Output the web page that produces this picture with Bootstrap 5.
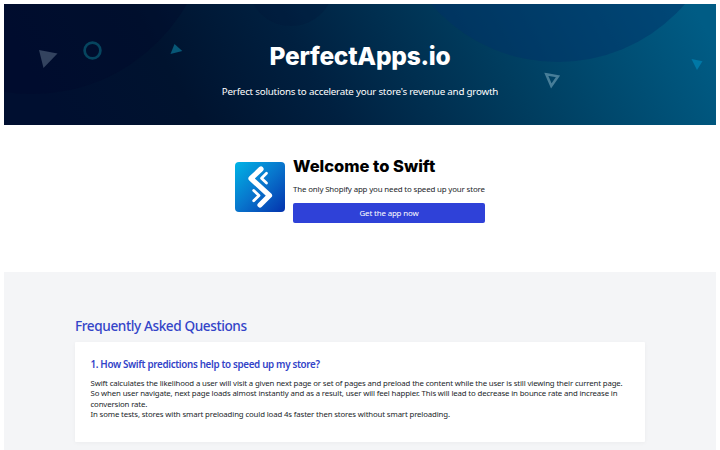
<!DOCTYPE html>
<html lang="en">
<head>
  <meta charset="UTF-8" />
  <title>PerfectApps.io</title>
  <meta name="viewport" content="width=device-width, initial-scale=1" />
  <link href="https://cdn.jsdelivr.net/npm/bootstrap@5.3.3/dist/css/bootstrap.min.css" rel="stylesheet" />
  <style>
    html { overflow:hidden; }
    body { font-family:"Noto Sans", "Open Sans", sans-serif; font-size:8px; color:#212529; background:#fff; padding:4px 4px 0; line-height:10.5px; }
    .hero { height:121px; background:#002345; padding-top:35px; }
    .hero-art { z-index:0; }
    .hero h1, .welcome h2 { font-family:Inter, "Open Sans", sans-serif; font-weight:800; }
    .hero h1 { font-size:24.5px; line-height:34px; letter-spacing:-.25px; }
    .hero p { font-size:9.8px; line-height:14px; margin-top:12px; letter-spacing:-.22px; }
    .welcome { height:147px; padding-top:31px; gap:8px; }
    .welcome h2 { font-size:16.5px; line-height:20px; color:#000; letter-spacing:0; }
    .app-icon { width:50px; height:50px; margin-top:6px; }
    .tagline { margin-top:8px; font-size:7.9px; letter-spacing:-.15px; }
    .btn-get { width:192px; height:20px; margin-top:8px; padding:0; font-size:7.9px; letter-spacing:-.15px; line-height:20px; color:#fff; background:#2f41d8; border:0; border-radius:2px; }
    .btn-get:hover { color:#fff; background:#2635b5; }
    .faq { height:178px; background:#f4f5f7; padding:45px 71px 0; }
    .faq h2 { font-size:13.6px; line-height:18px; font-weight:500; letter-spacing:-.4px; color:#3344c8; }
    .faq-box { height:100px; margin-top:7px; padding:16px 15.5px 0; border-radius:1px; box-shadow:0 1px 4px rgba(0,0,0,.04); }
    .faq-box h3 { font-size:9.8px; line-height:13px; font-weight:600; letter-spacing:-.33px; color:#3344c8; }
    .faq-box p { font-size:7.8px; letter-spacing:-.135px; margin-top:6.5px; }
  </style>
</head>
<body>

  <header class="hero position-relative overflow-hidden text-center text-white">
    <svg class="hero-art position-absolute top-0 start-0 w-100 h-100" viewBox="4 4 712 121" preserveAspectRatio="none" aria-hidden="true">
      <defs>
        <linearGradient id="sky" gradientUnits="userSpaceOnUse" x1="120" y1="230" x2="650" y2="-70">
          <stop offset="0" stop-color="#000f30" />
          <stop offset=".2" stop-color="#00132f" />
          <stop offset=".4" stop-color="#002040" />
          <stop offset=".68" stop-color="#003d5f" />
          <stop offset="1" stop-color="#005c85" />
        </linearGradient>
      </defs>
      <rect x="4" y="4" width="712" height="121" fill="url(#sky)" />
      <circle cx="32" cy="-84" r="178" fill="#000a2a" opacity=".35" />
      <circle cx="291" cy="-17" r="43" fill="#001238" opacity=".25" />
      <circle cx="558" cy="-106" r="168" fill="#003068" opacity=".45" />
      <path d="M39 50L57.500 53.500L43.500 68Z" fill="#33435f" />
      <circle cx="92.500" cy="50.500" r="7.900" fill="none" stroke="#06455f" stroke-width="2.700" />
      <path d="M174.500 44L182.300 51L170.500 54Z" fill="#075776" />
      <path d="M546.300 74.300L558 76.300L551.300 86Z" fill="none" stroke="#477e99" stroke-width="2.500" />
      <path d="M691.500 59L702.500 61.300L697 70Z" fill="#0078a6" />
    </svg>
    <div class="position-relative">
      <h1 class="mb-0">PerfectApps.io</h1>
      <p class="mb-0">Perfect solutions to accelerate your store's revenue and growth</p>
    </div>
  </header>

  <section class="welcome d-flex justify-content-center align-items-start">
    <svg class="app-icon flex-shrink-0" viewBox="0 0 50 50" role="img" aria-label="Swift">
      <defs>
        <linearGradient id="tile" x1="0" y1="0" x2="1" y2="1">
          <stop offset="0" stop-color="#00b4e6" />
          <stop offset=".5" stop-color="#0875cc" />
          <stop offset="1" stop-color="#0432ad" />
        </linearGradient>
      </defs>
      <rect width="50" height="50" rx="4" fill="url(#tile)" />
      <g fill="none" stroke="#fff" stroke-linecap="round" stroke-linejoin="round">
        <path d="M26 7L16 16.500L34.500 33.500L25 43" stroke-width="5.200" />
        <path d="M31.500 11.300L26.500 16.200L31.500 21" stroke-width="2.800" />
        <path d="M18.700 28.500L24 33.500L18.700 38.800" stroke-width="2.800" />
      </g>
    </svg>
    <div>
      <h2 class="mb-0 text-nowrap">Welcome to Swift</h2>
      <p class="tagline mb-0 text-nowrap">The only Shopify app you need to speed up your store</p>
      <a class="btn btn-get d-block" href="#">Get the app now</a>
    </div>
  </section>

  <section class="faq">
    <h2 class="mb-0">Frequently Asked Questions</h2>
    <div class="faq-box bg-white">
      <h3 class="mb-0">1. How Swift predictions help to speed up my store?</h3>
      <p class="mb-0 text-nowrap">
        Swift calculates the likelihood a user will visit a given next page or set of pages and preload the content while the user is still viewing their current page.<br />
        So when user navigate, next page loads almost instantly and as a result, user will feel happier. This will lead to decrease in bounce rate and increase in<br />
        conversion rate.<br />
        In some tests, stores with smart preloading could load 4s faster then stores without smart preloading.
      </p>
    </div>
  </section>

  <script src="https://cdn.jsdelivr.net/npm/bootstrap@5.3.3/dist/js/bootstrap.bundle.min.js"></script>
</body>
</html>
